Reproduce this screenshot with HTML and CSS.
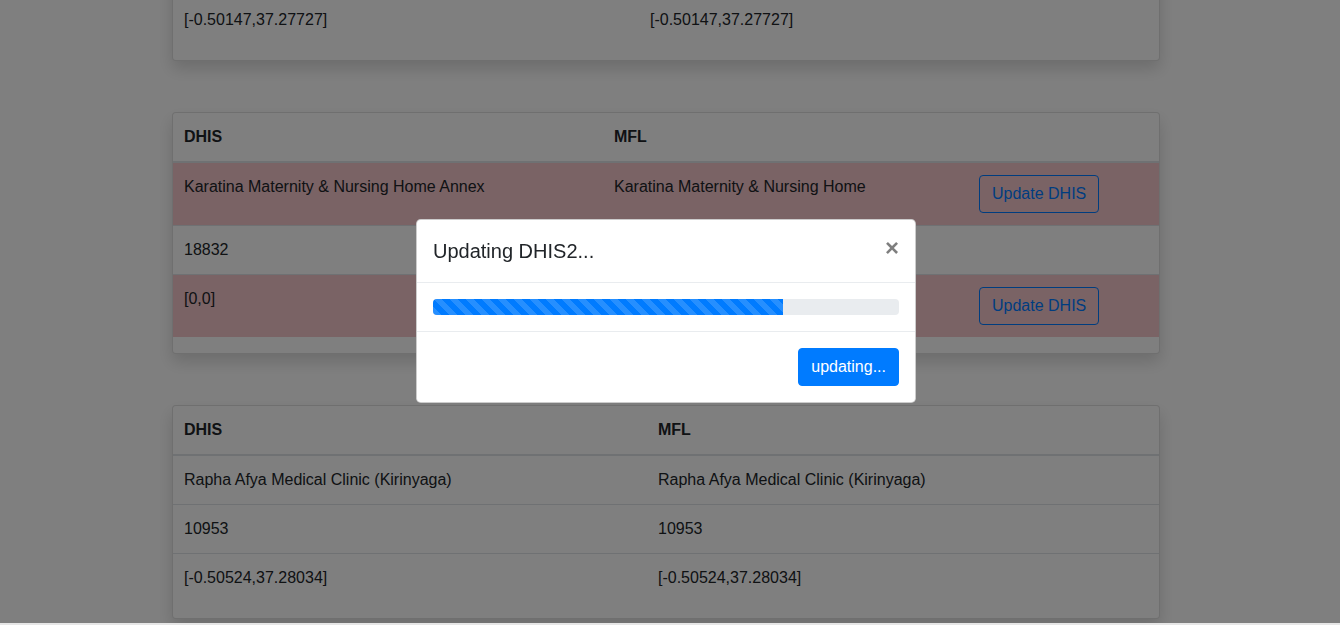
FILE: index.html
```html
<!DOCTYPE html>
<html lang="en">
<head>
<meta charset="utf-8">
<title>DHIS / MFL comparison</title>
<link rel="stylesheet" href="styles.css">
</head>
<body>
<main class="page">
  <section class="card">
    <table class="tbl tbl-a">
      <thead>
        <tr><th class="col-first">DHIS</th><th>MFL</th></tr>
      </thead>
      <tbody>
        <tr><td>Kerugoya Medical Centre</td><td>Kerugoya Medical Centre</td></tr>
        <tr><td>10542</td><td>10542</td></tr>
        <tr><td>[-0.50147,37.27727]</td><td>[-0.50147,37.27727]</td></tr>
      </tbody>
    </table>
  </section>

  <section class="card">
    <table class="tbl tbl-b">
      <thead>
        <tr><th class="col-first">DHIS</th><th class="col-second">MFL</th><th></th></tr>
      </thead>
      <tbody>
        <tr class="row-danger">
          <td>Karatina Maternity &amp; Nursing Home Annex</td>
          <td>Karatina Maternity &amp; Nursing Home</td>
          <td><button class="btn btn-outline" type="button">Update DHIS</button></td>
        </tr>
        <tr>
          <td>18832</td>
          <td>18832</td>
          <td></td>
        </tr>
        <tr class="row-danger">
          <td>[0,0]</td>
          <td>[-0.50147,37.27727]</td>
          <td><button class="btn btn-outline" type="button">Update DHIS</button></td>
        </tr>
      </tbody>
    </table>
  </section>

  <section class="card">
    <table class="tbl tbl-c">
      <thead>
        <tr><th class="col-first">DHIS</th><th>MFL</th></tr>
      </thead>
      <tbody>
        <tr><td>Rapha Afya Medical Clinic (Kirinyaga)</td><td>Rapha Afya Medical Clinic (Kirinyaga)</td></tr>
        <tr><td>10953</td><td>10953</td></tr>
        <tr><td>[-0.50524,37.28034]</td><td>[-0.50524,37.28034]</td></tr>
      </tbody>
    </table>
  </section>
</main>

<div class="backdrop"></div>

<div class="modal">
  <div class="modal-content">
    <div class="modal-header">
      <h5 class="modal-title">Updating DHIS2...</h5>
      <button class="close" type="button" aria-label="Close">&times;</button>
    </div>
    <div class="modal-body">
      <div class="progress">
        <div class="progress-bar" style="width: 75%"></div>
      </div>
    </div>
    <div class="modal-footer">
      <button class="btn btn-primary" type="button">updating...</button>
    </div>
  </div>
</div>

<div class="strip"></div>
</body>
</html>
```

FILE: styles.css
```css
* {
  box-sizing: border-box;
}

html, body {
  margin: 0;
  background: #fff;
}

body {
  padding-right: 8px;
  font-family: "Liberation Sans", Arial, sans-serif;
  font-size: 16px;
  line-height: 1.5;
  color: #212529;
  overflow: hidden;
}

.page {
  width: 988px;
  margin: -153px auto 0;
}

.card {
  background: #fff;
  border: 1px solid rgba(0, 0, 0, 0.125);
  border-radius: 4px;
  box-shadow: 0 8px 16px rgba(0, 0, 0, 0.15);
  margin-bottom: 51px;
  overflow: hidden;
}

.tbl {
  width: 100%;
  border-collapse: collapse;
  margin-bottom: 16px;
}

.tbl th,
.tbl td {
  padding: 12px;
  text-align: left;
  vertical-align: top;
  border-top: 1px solid #dee2e6;
}

.tbl th.col-first,
.tbl td:first-child {
  padding-left: 11px;
}

.tbl thead th {
  border-top: 0;
  border-bottom: 2px solid #dee2e6;
  vertical-align: bottom;
  font-weight: 700;
}

.tbl-a .col-first { width: 465px; }
.tbl-b .col-first { width: 429px; }
.tbl-b .col-second { width: 365px; }
.tbl-c .col-first { width: 473px; }

.row-danger td {
  background: #f5c6cb;
}

.btn {
  display: inline-block;
  font-family: inherit;
  font-size: 16px;
  line-height: 1.5;
  padding: 6px 12px;
  border-radius: 4px;
  border: 1px solid #007bff;
  cursor: pointer;
}

.btn-outline {
  background: transparent;
  color: #007bff;
}

.btn-primary {
  background: #007bff;
  color: #fff;
}

.backdrop {
  position: fixed;
  top: 0;
  left: 0;
  right: 0;
  bottom: 2px;
  background: #000;
  opacity: 0.5;
}

.strip {
  position: fixed;
  left: 0;
  right: 0;
  bottom: 0;
  height: 2px;
  background: #e6e6e6;
}

.modal {
  position: fixed;
  top: 0;
  left: 0;
  right: 8px;
  bottom: 4px;
  display: flex;
  align-items: center;
  justify-content: center;
}

.modal-content {
  width: 500px;
  background: #fff;
  border: 1px solid rgba(0, 0, 0, 0.2);
  border-radius: 4.8px;
}

.modal-header {
  display: flex;
  align-items: flex-start;
  justify-content: space-between;
  padding: 16px;
  border-bottom: 1px solid #e9ecef;
}

.modal-title {
  margin: 0;
  font-size: 20px;
  line-height: 1.5;
  font-weight: 500;
}

.close {
  padding: 16px;
  margin: -16px -16px -16px auto;
  background: transparent;
  border: 0;
  font-family: inherit;
  font-size: 24px;
  font-weight: 700;
  line-height: 1;
  color: #000;
  opacity: 0.5;
  text-shadow: 0 1px 0 #fff;
  cursor: pointer;
}

.modal-body {
  padding: 16px;
}

.progress {
  display: flex;
  height: 16px;
  background: #e9ecef;
  border-radius: 4px;
  overflow: hidden;
}

.progress-bar {
  background-color: #007bff;
  background-image: linear-gradient(45deg,
    rgba(255, 255, 255, 0.15) 25%, transparent 25%,
    transparent 50%, rgba(255, 255, 255, 0.15) 50%,
    rgba(255, 255, 255, 0.15) 75%, transparent 75%, transparent);
  background-size: 16px 16px;
}

.modal-footer {
  display: flex;
  justify-content: flex-end;
  padding: 16px;
  border-top: 1px solid #e9ecef;
}
```
